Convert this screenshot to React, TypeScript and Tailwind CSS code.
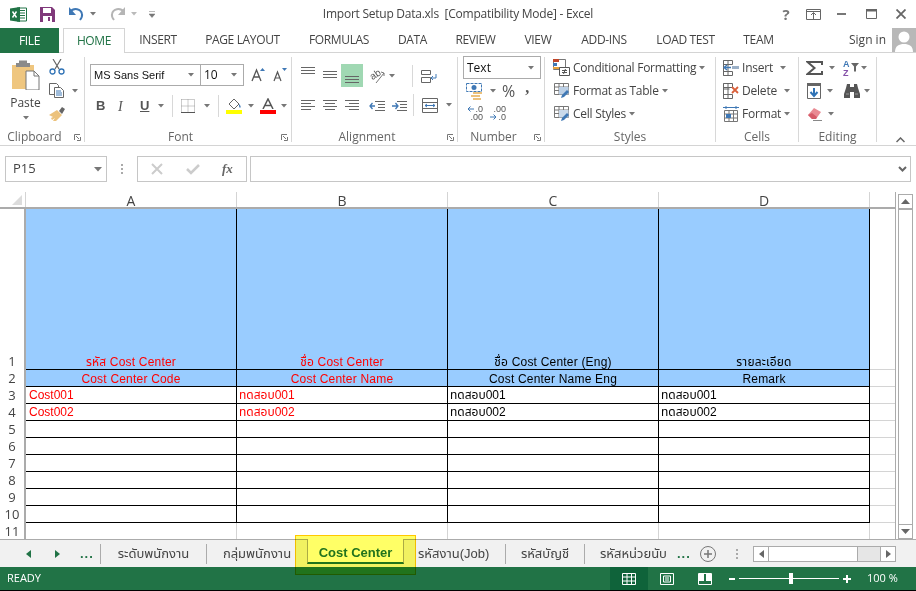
import type { ReactNode } from 'react';

const uiFont = "font-['Open_Sans','Noto_Sans',sans-serif]";
const cellFont = "font-['Liberation_Sans','Noto_Sans_Thai','Noto_Sans',sans-serif]";

const tabs = [
  { label: 'INSERT', w: 'w-[66px]' },
  { label: 'PAGE LAYOUT', w: 'w-[103px]' },
  { label: 'FORMULAS', w: 'w-[90px]' },
  { label: 'DATA', w: 'w-[57px]' },
  { label: 'REVIEW', w: 'w-[69px]' },
  { label: 'VIEW', w: 'w-[56px]' },
  { label: 'ADD-INS', w: 'w-[76px]' },
  { label: 'LOAD TEST', w: 'w-[87px]' },
  { label: 'TEAM', w: 'w-[59px]' },
];

function Dd({ className = '' }: { className?: string }) {
  return (
    <svg width="6" height="4" viewBox="0 0 6 4" className={`shrink-0 ${className}`}>
      <path d="M0 0h6L3 3.5z" fill="#777" />
    </svg>
  );
}

function Ico({ w = 16, h = 16, className = '', children }: { w?: number; h?: number; className?: string; children: ReactNode }) {
  return (
    <svg width={w} height={h} viewBox={`0 0 ${w} ${h}`} className={`shrink-0 ${className}`}>
      {children}
    </svg>
  );
}

function Launcher() {
  return (
    <Ico w={7} h={7}>
      <path d="M0.500 6V0.500H6M6.500 3v3.500H3" fill="none" stroke="#777" />
      <path d="M2 2l3 3" stroke="#777" />
    </Ico>
  );
}

function Lines({ rows, align = 'left' }: { rows: number[]; align?: 'left' | 'center' | 'right' }) {
  return (
    <Ico w={14} h={11}>
      {rows.map((y, i) => {
        const len = i % 2 === 0 ? 14 : 10;
        const x = align === 'left' ? 0 : align === 'right' ? 14 - len : (14 - len) / 2;
        return <path key={y} d={`M${x} ${y + 0.5}h${len}`} stroke="#666" />;
      })}
    </Ico>
  );
}

function VAlign({ rows }: { rows: number[] }) {
  return (
    <Ico w={14} h={23}>
      {rows.map((y) => (
        <path key={y} d={`M0 ${y + 0.5}h14`} stroke="#666" />
      ))}
    </Ico>
  );
}

function TableIcon({ accent }: { accent: string }) {
  return (
    <Ico w={17} h={17}>
      <path d="M1.500 1.500h14v11h-14zM1.500 5h14M1.500 8.500h14M6 1.500v11M10.500 1.500v11" fill="none" stroke="#777" />
      <path d="M6 5h9.500v7.500H6z" fill={accent} />
      <path d="M8 16l1-3 5-5 2 2-5 5z" fill="#3f78b5" />
    </Ico>
  );
}

function RibbonGroup({ w, label, launcher, children }: { w: string; label: string; launcher?: boolean; children: ReactNode }) {
  return (
    <div className={`relative flex h-[85px] shrink-0 flex-col border-r border-[#d8d8d8] ${w}`}>
      <div className="h-[71px] w-full shrink-0">{children}</div>
      <div className={`flex h-[17px] shrink-0 items-center justify-center text-[12px] leading-none text-[#666] ${launcher ? 'pr-[15px]' : ''}`}>{label}</div>
      {launcher && (
        <span className="absolute bottom-[1px] right-[3px]">
          <Launcher />
        </span>
      )}
    </div>
  );
}

function ClipboardGroup() {
  return (
    <RibbonGroup w="w-[85px]" label="Clipboard" launcher>
      <div className="flex">
        <div className="ml-[9px] flex w-[33px] flex-col items-center pt-[3px]">
          <Ico w={29} h={30}>
            <path d="M1 5h22v24H1z" fill="#efc67f" />
            <path d="M8 3h8v-2.500h-8zM5 3h14v4H5z" fill="#8a8a8a" />
            <path d="M15 11h8l5 5v14H15z" fill="#fff" stroke="#777" />
            <path d="M23 11v5h5" fill="none" stroke="#777" />
          </Ico>
          <span className="mt-[5px] text-[12px] leading-[16px] text-[#444]">Paste</span>
          <Dd className="mt-[5px]" />
        </div>
        <div className="ml-[7px] flex flex-col pt-[2px]">
          <Ico w={16} h={16}>
            <path d="M4 0l6 10M12 0L6 10" stroke="#666" fill="none" strokeWidth="1.200" />
            <circle cx="3.500" cy="12.500" r="2.500" fill="none" stroke="#2f72b5" strokeWidth="1.300" />
            <circle cx="12.500" cy="12.500" r="2.500" fill="none" stroke="#2f72b5" strokeWidth="1.300" />
          </Ico>
          <div className="mt-[8px] flex items-center">
            <Ico w={16} h={15}>
              <path d="M0.500 0.500h7l2 2v3M0.500 0.500v11h5" fill="#fff" stroke="#666" />
              <path d="M5.500 4.500h6l3 3v7h-9z" fill="#fff" stroke="#666" />
              <path d="M7 8h5M7 10h6M7 12h6" stroke="#3f78b5" />
            </Ico>
            <Dd className="ml-[7px]" />
          </div>
          <Ico w={17} h={15} className="mt-[8px]">
            <path d="M10 5l3-4 3 2-3 5z" fill="#666" />
            <path d="M0 9l8-5 5 5-6 6H4l2-3-3 2-1-2 2-1z" fill="#ecc27c" />
          </Ico>
        </div>
      </div>
    </RibbonGroup>
  );
}

function FontGroup() {
  return (
    <RibbonGroup w="w-[207px]" label="Font" launcher>
      <div className="ml-[5px] mt-[7px] flex h-[22px] items-center">
        <div className="flex h-[22px] w-[111px] items-center justify-between border border-[#ababab] pl-[3px] pr-[6px] font-['Liberation_Sans',sans-serif] text-[11px] text-[#111]">
          MS Sans Serif <Dd />
        </div>
        <div className="flex h-[22px] w-[43px] items-center justify-between border border-l-0 border-[#ababab] pl-[3px] pr-[6px] text-[12px] text-[#111]">
          10 <Dd />
        </div>
        <Ico w={14} h={14} className="ml-[7px]">
          <path d="M1 13L5.500 2 10 13M3 9h5" fill="none" stroke="#555" strokeWidth="1.300" />
          <path d="M9 3l2.500-3L14 3z" fill="#3f78b5" />
        </Ico>
        <Ico w={14} h={14} className="ml-[8px]">
          <path d="M1 13L4.500 4 8 13M2.500 10h4" fill="none" stroke="#555" strokeWidth="1.200" />
          <path d="M9 0h5l-2.500 3z" fill="#3f78b5" />
        </Ico>
      </div>
      <div className="mt-[9px] flex h-[22px] items-center pl-[11px] text-[#555]">
        <span className="w-[22px] font-['Liberation_Sans',sans-serif] text-[13px] font-bold">B</span>
        <span className="w-[22px] font-['Liberation_Serif',serif] text-[14px] italic">I</span>
        <span className="w-[17px] font-['Liberation_Sans',sans-serif] text-[13px] font-bold underline">U</span>
        <Dd className="ml-[1px]" />
        <span className="ml-[8px] h-[22px] w-px bg-[#d8d8d8]" />
        <Ico w={14} h={14} className="ml-[8px]">
          <path d="M0.500 0.500h13v13M0.500 0.500v13M7 0.500v13M0.500 7h13" fill="none" stroke="#999" strokeDasharray="1 1" />
          <path d="M0 13.500h14" stroke="#555" />
        </Ico>
        <Dd className="ml-[9px]" />
        <span className="ml-[8px] h-[22px] w-px bg-[#d8d8d8]" />
        <div className="ml-[7px] flex w-[17px] flex-col">
          <Ico w={16} h={11}>
            <path d="M3 6l5-5 5 5-5 5z" fill="#fff" stroke="#666" />
            <path d="M13 6c2 2 2 3 1 4-1-1-1-2-1-4z" fill="#3f78b5" />
          </Ico>
          <span className="mt-[1px] h-[4px] w-[16px] bg-[#ffff00]" />
        </div>
        <Dd className="ml-[5px]" />
        <div className="ml-[6px] flex w-[16px] flex-col items-center">
          <Ico w={12} h={11}>
            <path d="M1 11L6 1l5 10M3 7.500h6" fill="none" stroke="#555" strokeWidth="1.500" />
          </Ico>
          <span className="mt-[1px] h-[4px] w-[16px] bg-[#ff0000]" />
        </div>
        <Dd className="ml-[5px]" />
      </div>
    </RibbonGroup>
  );
}

function AlignmentGroup() {
  return (
    <RibbonGroup w="w-[166px]" label="Alignment" launcher>
      <div className="mt-[7px] flex h-[23px] items-center pl-[9px]">
        <VAlign rows={[3, 6, 9]} />
        <span className="ml-[8px]">
          <VAlign rows={[7, 10, 13]} />
        </span>
        <span className="ml-[4px] flex h-[23px] w-[22px] items-center justify-center bg-[#a0d8b3]">
          <VAlign rows={[12, 15, 18]} />
        </span>
        <Ico w={17} h={17} className="ml-[6px] overflow-visible">
          <text x="1" y="11" fontSize="10" fill="#555" fontFamily="Liberation Sans" transform="rotate(-35 6 8)">ab</text>
          <path d="M7 16L15 6M12 5l3 1v3" fill="none" stroke="#777" />
        </Ico>
        <Dd className="ml-[3px]" />
        <span className="ml-[17px] h-[22px] w-px bg-[#d8d8d8]" />
        <Ico w={16} h={16} className="ml-[8px]">
          <path d="M0.500 2.500h9v4h-9zM0.500 9.500h9v5h-9z" fill="none" stroke="#666" />
          <path d="M15 6v4H10M12 8l-2 2 2 2" fill="none" stroke="#3f78b5" />
        </Ico>
      </div>
      <div className="mt-[6px] flex h-[24px] items-center pl-[9px]">
        <Lines rows={[0, 3, 6, 9]} />
        <span className="ml-[8px] flex">
          <Lines rows={[0, 3, 6, 9]} align="center" />
        </span>
        <span className="ml-[8px] flex">
          <Lines rows={[0, 3, 6, 9]} align="right" />
        </span>
        <Ico w={16} h={11} className="ml-[10px]">
          <path d="M6 1.500h10M9 4.500h7M9 7.500h7M6 10.500h10" stroke="#666" />
          <path d="M6 6H1M3.500 3L1 6l2.500 3" fill="none" stroke="#3f78b5" strokeWidth="1.300" />
        </Ico>
        <Ico w={16} h={11} className="ml-[6px]">
          <path d="M6 1.500h10M9 4.500h7M9 7.500h7M6 10.500h10" stroke="#666" />
          <path d="M1 6h6M4.500 3L7 6 4.500 9" fill="none" stroke="#3f78b5" strokeWidth="1.300" />
        </Ico>
        <span className="ml-[6px] h-[22px] w-px bg-[#d8d8d8]" />
        <Ico w={16} h={15} className="ml-[8px]">
          <path d="M0.500 0.500h15v14h-15zM0.500 4.500h15M0.500 10.500h15" fill="none" stroke="#666" />
          <path d="M3 7.500h10M5 6L3 7.500 5 9M11 6l2 1.500L11 9" fill="none" stroke="#3f78b5" />
        </Ico>
        <Dd className="ml-[8px]" />
      </div>
    </RibbonGroup>
  );
}

function NumberGroup() {
  return (
    <RibbonGroup w="w-[87px]" label="Number" launcher>
      <div className="-mt-px ml-[5px] flex h-[23px] w-[78px] items-center justify-between border border-[#ababab] pl-[3px] pr-[6px] text-[12px] text-[#111]">
        Text <Dd />
      </div>
      <div className="mt-[3px] flex h-[18px] items-center pl-[8px]">
        <Ico w={17} h={17}>
          <path d="M0.500 0.500h15v8h-15z" fill="none" stroke="#3f78b5" strokeDasharray="3 1" />
          <circle cx="8" cy="4.500" r="2.500" fill="#3f78b5" />
          <path d="M7 9h9v2H7zM5 12h9v2H5zM7 15h8v2H7z" fill="#ecc27c" />
        </Ico>
        <Dd className="ml-[7px]" />
        <span className="ml-[6px] text-[16px] leading-none text-[#555]">%</span>
        <span className="ml-[10px] -mt-[6px] font-['Liberation_Serif',serif] text-[16px] font-bold leading-none text-[#555]">,</span>
      </div>
      <div className="mt-[5px] flex h-[16px] items-center pl-[8px] font-['Liberation_Sans',sans-serif] text-[9px] leading-[8px] text-[#555]">
        <div className="flex w-[17px] flex-col items-end">
          <span className="flex items-center">
            <Ico w={7} h={6} className="mr-px">
              <path d="M7 3H1M3.500 0.500L1 3l2.500 2.500" fill="none" stroke="#3f78b5" />
            </Ico>
            .0
          </span>
          <span>.00</span>
        </div>
        <div className="ml-[7px] flex w-[16px] flex-col items-end">
          <span>.00</span>
          <span className="flex items-center">
            <Ico w={7} h={6} className="mr-px">
              <path d="M0 3h6M3.500 0.500L6 3 3.500 5.500" fill="none" stroke="#3f78b5" />
            </Ico>
            .0
          </span>
        </div>
      </div>
    </RibbonGroup>
  );
}

function StylesGroup() {
  return (
    <RibbonGroup w="w-[171px]" label="Styles">
      <div className="-mt-px flex h-[23px] items-center pl-[8px] text-[12px] tracking-[-0.25px] text-[#444]">
        <Ico w={17} h={17}>
          <path d="M0.500 0.500h12v10h-12z" fill="#fff" stroke="#777" />
          <path d="M0 0h6v3H0z" fill="#c0462a" />
          <path d="M0 4h4v3H0z" fill="#3f78b5" />
          <path d="M0 8h7v2H0z" fill="#e6a23c" />
          <path d="M6.500 8.500h10v8h-10z" fill="#fff" stroke="#555" />
          <path d="M9 11.500h5M9 13.500h5M12.500 10l-2 5" stroke="#555" fill="none" />
        </Ico>
        <span className="ml-[3px]">Conditional Formatting</span>
        <Dd className="ml-[3px]" />
      </div>
      <div className="flex h-[23px] items-center pl-[8px] text-[12px] tracking-[-0.25px] text-[#444]">
        <TableIcon accent="#bcd0e6" />
        <span className="ml-[3px]">Format as Table</span>
        <Dd className="ml-[3px]" />
      </div>
      <div className="flex h-[23px] items-center pl-[8px] text-[12px] tracking-[-0.25px] text-[#444]">
        <TableIcon accent="#c9d9ea" />
        <span className="ml-[3px]">Cell Styles</span>
        <Dd className="ml-[3px]" />
      </div>
    </RibbonGroup>
  );
}

function CellsGroup() {
  return (
    <RibbonGroup w="w-[83px]" label="Cells">
      <div className="-mt-px flex h-[23px] items-center pl-[7px] text-[12px] tracking-[-0.2px] text-[#444]">
        <Ico w={16} h={16}>
          <path d="M0.500 0.500h9v4h-9zM0.500 11.500h9v4h-9zM0.500 0.500v15M5 0.500v15" fill="none" stroke="#666" />
          <path d="M9 6h7v3H9z" fill="#9bb0c7" />
          <path d="M8 7.500H1M4 5L1 7.500 4 10" fill="none" stroke="#3f78b5" strokeWidth="1.300" />
        </Ico>
        <span className="ml-[3px] w-[37px]">Insert</span>
        <Dd className="ml-[1px]" />
      </div>
      <div className="flex h-[23px] items-center pl-[7px] text-[12px] tracking-[-0.2px] text-[#444]">
        <Ico w={16} h={16}>
          <path d="M0.500 0.500h9v4h-9zM0.500 11.500h9v4h-9zM0.500 0.500v15M5 0.500v15M0.500 6h6" fill="none" stroke="#666" />
          <path d="M9 4l6 6M15 4l-6 6" stroke="#d9603b" strokeWidth="1.800" />
        </Ico>
        <span className="ml-[3px] w-[41px]">Delete</span>
        <Dd className="ml-[1px]" />
      </div>
      <div className="flex h-[23px] items-center pl-[7px] text-[12px] tracking-[-0.2px] text-[#444]">
        <Ico w={16} h={16}>
          <path d="M0 1.500h16M3 0v3M13 0v3" stroke="#3f78b5" />
          <path d="M1.500 4.500h13v11h-13zM1.500 8h13M1.500 12h13M6 4.500v11M10.500 4.500v11" fill="none" stroke="#777" />
          <path d="M3 8h5v4H3z" fill="#3f78b5" />
        </Ico>
        <span className="ml-[3px]">Format</span>
        <Dd className="ml-[3px]" />
      </div>
    </RibbonGroup>
  );
}

function EditingGroup() {
  return (
    <RibbonGroup w="w-[78px]" label="Editing">
      <div className="-mt-px flex h-[23px] items-center pl-[7px]">
        <Ico w={17} h={14}>
          <path d="M16 4V1H1.500l7 6-7 6H16v-3" fill="none" stroke="#555" strokeWidth="2" />
        </Ico>
        <Dd className="ml-[6px]" />
        <Ico w={17} h={17} className="ml-[7px]">
          <text x="1" y="8" fontSize="9" fontWeight="bold" fill="#3f78b5" fontFamily="Liberation Sans">A</text>
          <text x="1" y="17" fontSize="9" fontWeight="bold" fill="#8652a8" fontFamily="Liberation Sans">Z</text>
          <path d="M9 4h8l-3 3.500v5h-2v-5z" fill="#666" />
        </Ico>
        <Dd className="ml-[2px]" />
      </div>
      <div className="flex h-[23px] items-center pl-[8px]">
        <Ico w={14} h={16}>
          <path d="M0.500 0.500h13v15H0.500z" fill="#fff" stroke="#666" />
          <path d="M0 0h14v3H0z" fill="#666" />
          <path d="M7 5v7M3.500 9L7 13l3.500-4" fill="none" stroke="#2f72b5" strokeWidth="2" />
        </Ico>
        <Dd className="ml-[6px]" />
        <Ico w={16} h={14} className="ml-[11px]">
          <path d="M3 0h3v3h4V0h3l1 4 2 6v4h-6V8H6v6H0v-4l2-6z" fill="#555" />
          <path d="M2 10h3M11 10h3" stroke="#999" />
        </Ico>
        <Dd className="ml-[4px]" />
      </div>
      <div className="flex h-[23px] items-center pl-[8px]">
        <Ico w={15} h={14}>
          <path d="M1 8l6-7 7 4-5 7H5z" fill="#e98a93" />
          <path d="M1 8l4 4h4l1-2-5-4z" fill="#d65b68" />
          <path d="M6 13.500h9" stroke="#888" />
        </Ico>
        <Dd className="ml-[6px]" />
      </div>
    </RibbonGroup>
  );
}

function Ribbon() {
  return (
    <div className="flex h-[93px] border-b border-[#d4d4d4] pt-[4px]">
      <ClipboardGroup />
      <FontGroup />
      <AlignmentGroup />
      <NumberGroup />
      <StylesGroup />
      <CellsGroup />
      <EditingGroup />
      <div className="flex flex-1 items-end justify-end pb-[2px] pr-[11px]">
        <Ico w={9} h={6}>
          <path d="M0.500 5L4.500 1l4 4" fill="none" stroke="#666" strokeWidth="1.500" />
        </Ico>
      </div>
    </div>
  );
}

function FormulaBar() {
  return (
    <div className="flex h-[46px] items-start pl-[5px] pt-[10px]">
      <div className="flex h-[26px] w-[102px] items-center justify-between border border-[#c6c6c6] pl-[7px] pr-[4px] text-[13px] text-[#444]">
        P15
        <Ico w={8} h={5}>
          <path d="M0 0h8L4 4.500z" fill="#777" />
        </Ico>
      </div>
      <div className="flex h-[26px] w-[30px] flex-col items-center justify-center gap-[2px]">
        <span className="h-[2px] w-[2px] bg-[#aaa]" />
        <span className="h-[2px] w-[2px] bg-[#aaa]" />
        <span className="h-[2px] w-[2px] bg-[#aaa]" />
      </div>
      <div className="flex h-[26px] w-[110px] items-center border border-[#c6c6c6] pl-[13px]">
        <Ico w={12} h={12}>
          <path d="M1 1l10 10M11 1L1 11" stroke="#ccc" strokeWidth="2" />
        </Ico>
        <Ico w={14} h={12} className="ml-[23px]">
          <path d="M1 6l4 4 8-8" fill="none" stroke="#ccc" strokeWidth="2.500" />
        </Ico>
        <span className="ml-[22px] font-['Liberation_Serif',serif] text-[13px] font-bold italic text-[#666]">fx</span>
      </div>
      <div className="ml-[3px] flex h-[26px] w-[661px] items-center justify-end border border-[#c6c6c6] pr-[3px]">
        <Ico w={9} h={6}>
          <path d="M1 1l3.500 3.500L8 1" fill="none" stroke="#666" strokeWidth="2" />
        </Ico>
      </div>
    </div>
  );
}

const rowClass = `flex h-[17px] ${cellFont} text-[12px] leading-[16px]`;
const dataCell = 'h-full w-[211px] shrink-0 overflow-hidden whitespace-nowrap border-b border-r border-black pl-[3px]';
const thaiCell = 'h-full w-[211px] shrink-0 overflow-hidden whitespace-nowrap border-b border-r border-black pl-[2px]';
const titleCell = 'flex h-full w-[211px] shrink-0 items-end justify-center border-b border-r border-black tracking-[0.2px] leading-[14px]';
const headCell = 'h-full w-[211px] shrink-0 border-b border-r border-black pt-[1px] text-center tracking-[0.2px] leading-[16px]';
const restCell = 'h-full flex-1 border-b border-[#d4d4d4]';
const rowNum = 'flex h-[17px] items-center justify-center text-[13px] text-[#444]';

function Sheet() {
  const numbers = [2, 3, 4, 5, 6, 7, 8, 9, 10];
  return (
    <div className="flex h-[347px]">
      <div className="w-[896px] shrink-0">
        <div className="flex h-[17px] border-b-2 border-[#ababab] text-[14px] text-[#444]">
          <div className="flex w-[26px] items-end justify-end border-r border-[#d4d4d4] pb-[2px] pr-[3px]">
            <Ico w={10} h={10}>
              <path d="M10 0v10H0z" fill="#dcdcdc" />
            </Ico>
          </div>
          <div className="w-[211px] border-r border-[#d4d4d4] text-center leading-[17px]">A</div>
          <div className="w-[211px] border-r border-[#d4d4d4] text-center leading-[17px]">B</div>
          <div className="w-[211px] border-r border-[#d4d4d4] text-center leading-[17px]">C</div>
          <div className="w-[211px] border-r border-[#d4d4d4] text-center leading-[17px]">D</div>
          <div className="flex-1 border-r border-[#ababab]" />
        </div>
        <div className="flex">
          <div className="w-[26px] shrink-0 border-r-2 border-[#ababab]">
            <div className="flex h-[161px] items-end justify-center text-[13px] leading-[17px] text-[#444]">1</div>
            {numbers.map((n) => (
              <div key={n} className={rowNum}>
                {n}
              </div>
            ))}
            <div className={rowNum}>11</div>
          </div>
          <div className="min-w-0 flex-1 border-r border-[#ababab]">
            <div className={`flex h-[161px] ${cellFont} text-[12px]`}>
              <div className="flex w-[844px] shrink-0 bg-[#99ccff]">
                <div className={`${titleCell} text-[#ff0000]`}>รหัส Cost Center</div>
                <div className={`${titleCell} text-[#ff0000]`}>ชื่อ Cost Center</div>
                <div className={`${titleCell} text-black`}>ชื่อ Cost Center (Eng)</div>
                <div className={`${titleCell} text-black`}>รายละเอียด</div>
              </div>
              <div className={restCell} />
            </div>
            <div className={rowClass}>
              <div className="flex w-[844px] shrink-0 bg-[#99ccff]">
                <div className={`${headCell} text-[#ff0000]`}>Cost Center Code</div>
                <div className={`${headCell} text-[#ff0000]`}>Cost Center Name</div>
                <div className={`${headCell} text-black`}>Cost Center Name Eng</div>
                <div className={`${headCell} text-black`}>Remark</div>
              </div>
              <div className={restCell} />
            </div>
            <div className={rowClass}>
              <div className={`${dataCell} text-[#ff0000]`}>Cost001</div>
              <div className={`${thaiCell} text-[#ff0000]`}>ทดสอบ001</div>
              <div className={`${thaiCell} text-black`}>ทดสอบ001</div>
              <div className={`${thaiCell} text-black`}>ทดสอบ001</div>
              <div className={restCell} />
            </div>
            <div className={rowClass}>
              <div className={`${dataCell} text-[#ff0000]`}>Cost002</div>
              <div className={`${thaiCell} text-[#ff0000]`}>ทดสอบ002</div>
              <div className={`${thaiCell} text-black`}>ทดสอบ002</div>
              <div className={`${thaiCell} text-black`}>ทดสอบ002</div>
              <div className={restCell} />
            </div>
            {[5, 6, 7, 8, 9, 10].map((n) => (
              <div key={n} className={rowClass}>
                <div className={dataCell} />
                <div className={dataCell} />
                <div className={dataCell} />
                <div className={dataCell} />
                <div className={restCell} />
              </div>
            ))}
            <div className="flex h-[17px]">
              <div className="w-[211px] border-r border-[#d4d4d4]" />
              <div className="w-[211px] border-r border-[#d4d4d4]" />
              <div className="w-[211px] border-r border-[#d4d4d4]" />
              <div className="w-[211px] border-r border-[#d4d4d4]" />
            </div>
          </div>
        </div>
      </div>
      <div className="ml-[2px] mt-[2px] flex w-[15px] flex-col">
        <div className="flex h-[15px] items-center justify-center border border-[#ababab]">
          <Ico w={9} h={5}>
            <path d="M0 5l4.500-5L9 5z" fill="#666" />
          </Ico>
        </div>
        <div className="flex-1 border-x border-t border-[#ababab]" />
        <div className="flex h-[15px] items-center justify-center border border-[#ababab]">
          <Ico w={9} h={5}>
            <path d="M0 0l4.500 5L9 0z" fill="#666" />
          </Ico>
        </div>
      </div>
    </div>
  );
}

function SheetTabs() {
  return (
    <div className={`relative flex h-[28px] items-center border-t border-[#ababab] bg-[#f1f1f1] ${cellFont} text-[13px] text-[#444]`}>
      <div className="flex w-[100px] items-center pl-[26px]">
        <Ico w={6} h={8}>
          <path d="M5 0v8L0 4z" fill="#217346" />
        </Ico>
        <Ico w={6} h={8} className="ml-[23px]">
          <path d="M0 0v8l5-4z" fill="#217346" />
        </Ico>
        <span className="ml-[19px] font-bold leading-none tracking-[1px] text-[#217346]">...</span>
      </div>
      <span className="h-[20px] w-px bg-[#ababab]" />
      <span className="w-[105px] text-center">ระดับพนักงาน</span>
      <span className="h-[20px] w-px bg-[#ababab]" />
      <span className="w-[100px] text-center">กลุ่มพนักงาน</span>
      <div className="-mt-px flex h-[25px] w-[97px] shrink-0 items-center justify-center self-start border-x border-b-2 border-x-[#ababab] border-b-[#217346] bg-white pt-[4px] font-bold text-[#217346]">
        Cost Center
      </div>
      <span className="w-[101px] whitespace-nowrap pl-[14px]">รหัสงาน(Job)</span>
      <span className="h-[20px] w-px bg-[#ababab]" />
      <span className="w-[78px] text-center">รหัสบัญชี</span>
      <span className="h-[20px] w-px bg-[#ababab]" />
      <span className="w-[92px] whitespace-nowrap pl-[15px]">รหัสหน่วยนับ</span>
      <span className="w-[12px] font-bold leading-none tracking-[1px] text-[#217346]">...</span>
      <Ico w={18} h={18} className="ml-[10px]">
        <circle cx="9" cy="9" r="7.500" fill="none" stroke="#777" />
        <path d="M5 9h8M9 5v8" stroke="#777" strokeWidth="1.500" />
      </Ico>
      <div className="ml-[12px] flex w-[15px] flex-col items-center gap-[2px]">
        <span className="h-[2px] w-[2px] bg-[#aaa]" />
        <span className="h-[2px] w-[2px] bg-[#aaa]" />
        <span className="h-[2px] w-[2px] bg-[#aaa]" />
      </div>
      <div className="ml-[9px] flex h-[16px] w-[143px] border border-[#ababab] bg-[#e6e6e6]">
        <div className="flex w-[15px] items-center justify-center border-r border-[#ababab] bg-white">
          <Ico w={5} h={8}>
            <path d="M5 0v8L0 4z" fill="#666" />
          </Ico>
        </div>
        <div className="w-[89px] border-r border-[#ababab] bg-white" />
        <div className="flex-1" />
        <div className="flex w-[15px] items-center justify-center border-l border-[#ababab] bg-white">
          <Ico w={5} h={8}>
            <path d="M0 0v8l5-4z" fill="#666" />
          </Ico>
        </div>
      </div>
      <div className="absolute left-[295px] top-[-5px] h-[40px] w-[121px] border border-[#ffc800] bg-[#ffff66] mix-blend-multiply" />
    </div>
  );
}

function StatusBar() {
  return (
    <div className="flex h-[24px] items-center border-b border-black bg-[#217346] pl-[7px] text-[11px] text-white">
      <span className="w-[603px]">READY</span>
      <div className="flex h-full w-[38px] items-center justify-center bg-[#0f633a]">
        <Ico w={14} h={12}>
          <path d="M0.500 0.500h13v11H0.500zM0.500 4h13M0.500 8h13M5 0.500v11M9.500 0.500v11" fill="none" stroke="#fff" />
        </Ico>
      </div>
      <Ico w={14} h={12} className="ml-[12px]">
        <path d="M0.500 0.500h13v11H0.500z" fill="none" stroke="#fff" />
        <path d="M3.500 3h7v6h-7zM5 5h4M5 7h4" fill="none" stroke="#fff" />
      </Ico>
      <Ico w={14} h={12} className="ml-[24px]">
        <path d="M0.500 0.500h13v11H0.500z" fill="none" stroke="#fff" />
        <path d="M1 1h5v7H1zM8 1h5v7H8z" fill="#fff" />
      </Ico>
      <span className="ml-[17px] h-[2px] w-[6px] bg-white" />
      <div className="relative ml-[4px] h-px w-[100px] bg-white">
        <span className="absolute left-[50px] top-[-5px] h-[11px] w-[4px] bg-white" />
      </div>
      <Ico w={8} h={8} className="ml-[4px]">
        <path d="M0 4h8M4 0v8" stroke="#fff" strokeWidth="2" />
      </Ico>
      <span className="ml-[16px]">100 %</span>
    </div>
  );
}

export default function App() {
  return (
    <div className={`h-[591px] w-[916px] overflow-hidden bg-white ${uiFont} text-[12px] text-[#444]`}>
      <div className="flex h-[28px] items-center">
        <Ico w={17} h={15} className="ml-[10px]">
          <path d="M7 1h9.500v13H7z" fill="#fff" stroke="#217346" />
          <path d="M10 3.500h5M10 6h5M10 8.500h5M10 11h5" stroke="#217346" />
          <path d="M0 1.500L10 0v15L0 13.500z" fill="#217346" />
          <path d="M2.500 4.500l4 6M6.500 4.500l-4 6" stroke="#fff" strokeWidth="1.400" />
        </Ico>
        <Ico w={15} h={15} className="ml-[13px]">
          <path d="M0 0h12l3 3v12H0z" fill="#80397b" />
          <path d="M3 1h8v5H3z" fill="#fff" />
          <path d="M3 9h9v6H3z" fill="#fff" />
          <path d="M8 10h2v4H8z" fill="#80397b" />
        </Ico>
        <Ico w={15} h={14} className="ml-[14px]">
          <path d="M1 5c4-5 11-3 12 2 .5 2-.5 4-2 6" fill="none" stroke="#3f78b5" strokeWidth="2" />
          <path d="M0 0v8h7z" fill="#3f78b5" />
        </Ico>
        <Dd className="ml-[6px]" />
        <Ico w={15} h={14} className="ml-[14px]">
          <path d="M14 5C10 0 3 2 2 7c-.5 2 .5 4 2 6" fill="none" stroke="#b5b5b5" strokeWidth="2" />
          <path d="M15 0v8H8z" fill="#b5b5b5" />
        </Ico>
        <Dd className="ml-[6px] opacity-50" />
        <Ico w={6} h={7} className="ml-[12px]">
          <path d="M0 0.500h6M0 3h6l-3 3.500L0 3z" fill="#777" stroke="#777" strokeWidth="0.500" />
        </Ico>
        <span className="ml-[166px] w-[274px] whitespace-pre text-center text-[12px] tracking-[-0.25px] text-[#444]">Import Setup Data.xls  [Compatibility Mode] - Excel</span>
        <span className="ml-[185px] w-[12px] text-center text-[15px] font-bold text-[#777]">?</span>
        <Ico w={15} h={11} className="ml-[14px]">
          <path d="M0.500 0.500h14v10H0.500zM0.500 2.500h14" fill="none" stroke="#666" />
          <path d="M7.500 10V4M5 6l2.500-2.500L10 6" fill="none" stroke="#666" />
        </Ico>
        <span className="ml-[16px] h-[2px] w-[9px] bg-[#777]" />
        <Ico w={11} h={10} className="ml-[20px]">
          <path d="M0.500 0.500h10v9h-10z" fill="none" stroke="#666" />
          <path d="M0 0h11v2.500H0z" fill="#666" />
        </Ico>
        <Ico w={10} h={10} className="ml-[19px]">
          <path d="M0.500 0.500l9 9M9.500 0.500l-9 9" stroke="#666" strokeWidth="1.800" />
        </Ico>
      </div>
      <div className="flex h-[25px] border-b border-[#d4d4d4] text-[12px] tracking-[-0.35px] text-[#444]">
        <div className="flex h-[25px] w-[59px] items-center justify-center bg-[#217346] text-white">FILE</div>
        <div className="ml-[4px] flex h-[25px] w-[62px] items-center justify-center border-x border-t border-[#d4d4d4] bg-white text-[#217346]">HOME</div>
        {tabs.map((t) => (
          <div key={t.label} className={`flex h-[24px] items-center justify-center ${t.w}`}>
            {t.label}
          </div>
        ))}
        <span className="ml-[61px] flex h-[24px] w-[36px] items-center whitespace-nowrap tracking-normal">Sign in</span>
        <div className="ml-[7px] flex h-[24px] w-[24px] items-start justify-center overflow-hidden bg-[#b8b8b8]">
          <Ico w={20} h={24}>
            <circle cx="10" cy="9" r="5.500" fill="#fff" />
            <path d="M1 24c0-6 4-8 9-8s9 2 9 8z" fill="#fff" />
          </Ico>
        </div>
      </div>
      <Ribbon />
      <FormulaBar />
      <Sheet />
      <SheetTabs />
      <StatusBar />
    </div>
  );
}
